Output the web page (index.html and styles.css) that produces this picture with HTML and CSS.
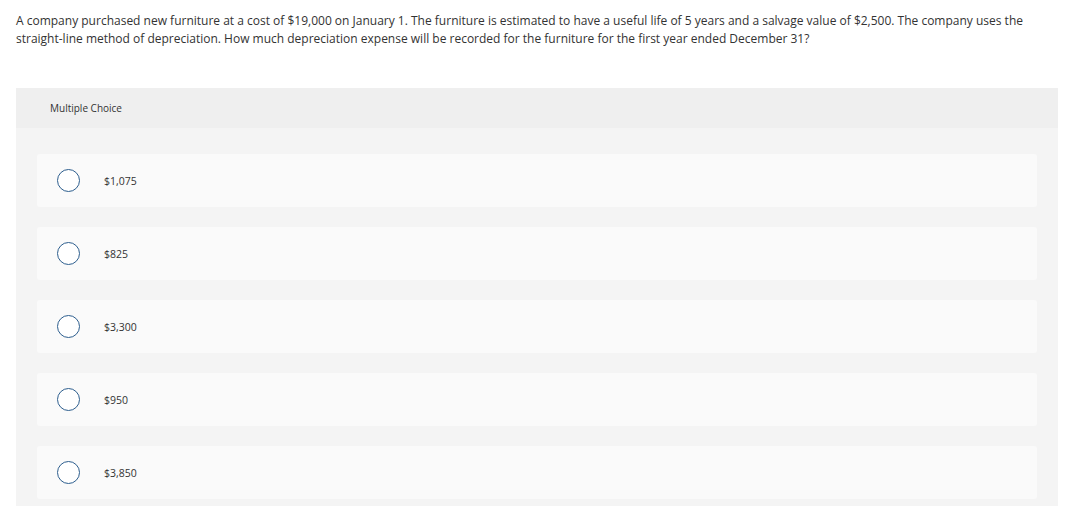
FILE: index.html
```html
<!DOCTYPE html>
<html>
<head>
<meta charset="utf-8">
<link rel="stylesheet" href="styles.css">
</head>
<body>
<div class="page">
  <p class="question">A company purchased new furniture at a cost of $19,000 on January 1. The furniture is estimated to have a useful life of 5 years and a salvage value of $2,500. The company uses the straight-line method of depreciation. How much depreciation expense will be recorded for the furniture for the first year ended December 31?</p>
  <div class="panel">
    <div class="panel-head">Multiple Choice</div>
    <div class="panel-body">
      <div class="option"><span class="radio"></span><span class="label">$1,075</span></div>
      <div class="option"><span class="radio"></span><span class="label">$825</span></div>
      <div class="option"><span class="radio"></span><span class="label">$3,300</span></div>
      <div class="option"><span class="radio"></span><span class="label">$950</span></div>
      <div class="option"><span class="radio"></span><span class="label">$3,850</span></div>
    </div>
  </div>
</div>
</body>
</html>
```

FILE: styles.css
```css
html, body {
  margin: 0;
  padding: 0;
  background: #ffffff;
}
.page {
  padding: 12px 19px 0 16px;
  font-family: "Open Sans", "Liberation Sans", sans-serif;
  color: #333333;
}
.question {
  margin: 0;
  font-size: 12px;
  line-height: 18px;
}
.panel {
  margin-top: 40px;
  background: #f4f4f4;
}
.panel-head {
  background: #efefef;
  height: 40px;
  display: flex;
  align-items: center;
  padding-left: 34px;
  font-size: 10px;
}
.panel-body {
  padding: 26px 21px 20px 21px;
  display: flex;
  flex-direction: column;
  gap: 20px;
}
.option {
  background: #fafafa;
  border-radius: 3px;
  height: 53px;
  display: flex;
  align-items: center;
  padding-left: 20px;
}
.radio {
  width: 21px;
  height: 21px;
  border: 1.5px solid #2d5e8e;
  border-radius: 50%;
  background: #ffffff;
  flex: none;
}
.label {
  margin-left: 24px;
  font-size: 10.5px;
}
```
